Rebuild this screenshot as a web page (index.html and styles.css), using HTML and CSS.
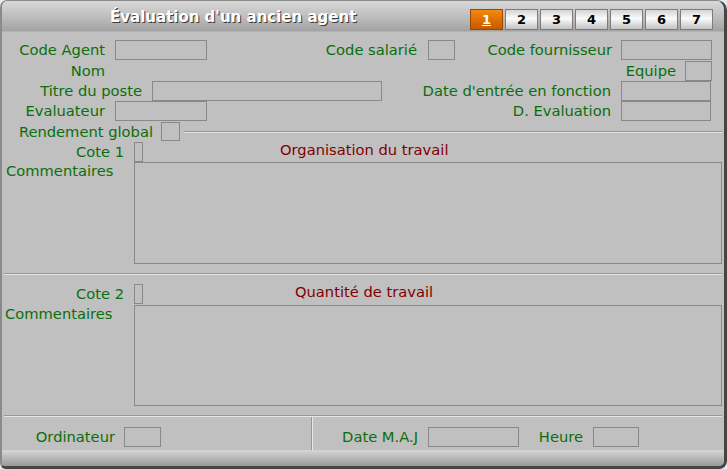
FILE: index.html
```html
<!DOCTYPE html>
<html lang="fr">
<head>
<meta charset="utf-8">
<title>Évaluation d'un ancien agent</title>
<link rel="stylesheet" href="styles.css">
</head>
<body>
<div class="win">
  <div class="titlebar">
    <span class="title">Évaluation d'un ancien agent</span>
    <div class="tabs">
      <span class="tab on"><u>1</u></span>
      <span class="tab">2</span>
      <span class="tab">3</span>
      <span class="tab">4</span>
      <span class="tab">5</span>
      <span class="tab">6</span>
      <span class="tab">7</span>
    </div>
  </div>
  <div class="main">
    <div class="row">
      <span class="lab w103">Code Agent</span><span class="box ml10 w92"></span>
      <span class="lab w210">Code salarié</span><span class="box ml11 w27"></span>
      <span class="lab w157">Code fournisseur</span><span class="box ml9 w91"></span>
    </div>
    <div class="row mt1 pr12">
      <span class="lab w103">Nom</span><span class="fill"></span>
      <span class="lab">Equipe</span><span class="box ml9 w27"></span>
    </div>
    <div class="row pr13">
      <span class="lab w140">Titre du poste</span><span class="box ml10 w230"></span>
      <span class="lab fill">Date d'entrée en fonction</span><span class="box ml10 w90"></span>
    </div>
    <div class="row pr13">
      <span class="lab w103">Evaluateur</span><span class="box ml10 w92"></span>
      <span class="lab fill">D. Evaluation</span><span class="box ml10 w90"></span>
    </div>
    <div class="row mt1 h19">
      <span class="lab w151">Rendement global</span><span class="box ml8 w19 h19"></span>
      <span class="groove"></span>
    </div>

    <div class="row mt1">
      <span class="lab w122">Cote 1</span><span class="box ml10 w9"></span>
      <span class="red ml137">Organisation du travail</span>
    </div>
    <div class="trow">
      <span class="lab com">Commentaires</span><span class="box ta"></span>
    </div>
    <div class="hsep"></div>

    <div class="row mt9">
      <span class="lab w122">Cote 2</span><span class="box ml10 w9"></span>
      <span class="red ml152">Quantité de travail</span>
    </div>
    <div class="trow mt1">
      <span class="lab com com2">Commentaires</span><span class="box ta ta2"></span>
    </div>
    <div class="hsep"></div>

    <div class="bottom">
      <div class="bleft">
        <span class="lab w113">Ordinateur</span><span class="box ml9 w37"></span>
      </div>
      <div class="vsep"></div>
      <div class="bright">
        <span class="lab w105">Date M.A.J</span><span class="box ml10 w91"></span>
        <span class="lab w64">Heure</span><span class="box ml10 w46"></span>
      </div>
    </div>
  </div>
  <div class="statusbar"></div>
</div>
</body>
</html>
```
FILE: styles.css
```css
body {
  margin: 0;
  background: #dff0ef;
  font-family: "DejaVu Sans", "Liberation Sans", sans-serif;
}

.win {
  width: 727px;
  height: 469px;
  box-sizing: border-box;
  border-left: 2px solid #8a8a8a;
  border-top: 1px solid #8a8a8a;
  border-right: 3px solid #454545;
  border-bottom: 3px solid #454545;
  border-radius: 7px 10px 8px 6px;
  background: #c0c0c0;
  display: flex;
  flex-direction: column;
  overflow: hidden;
}

.titlebar {
  height: 30px;
  border-bottom: 1px solid #b2b2b2;
  background: linear-gradient(#d8d8d8, #bcbcbc 55%, #a2a2a2);
  display: flex;
  flex: none;
}

.title {
  margin-left: 108px;
  padding-top: 2px;
  align-self: center;
  font-weight: bold;
  font-size: 15px;
  color: #ffffff;
  text-shadow: 1px 1px 0 #3a3a3a;
  white-space: nowrap;
}

.tabs {
  display: flex;
  gap: 2px;
  margin: 8px 11px 0 auto;
  align-self: flex-start;
}

.tab {
  width: 33px;
  height: 21px;
  box-sizing: border-box;
  border: 1px solid #7c7c7c;
  background: linear-gradient(#d4d4d4, #fbfbfb 45%, #c2c2c2);
  font-weight: bold;
  font-size: 13px;
  color: #000;
  display: flex;
  align-items: center;
  justify-content: center;
}

.tab.on {
  background: linear-gradient(#f28a14, #e07000 50%, #c65a00);
  border-color: #9a4800;
  color: #fff;
}

.main {
  flex: 1;
  padding-top: 8px;
  display: flex;
  flex-direction: column;
}

.row {
  display: flex;
  align-items: center;
  height: 20px;
  flex: none;
}

.trow {
  display: flex;
  align-items: flex-start;
  flex: none;
}

.lab {
  color: #0b6e0b;
  font-size: 14.7px;
  line-height: 18px;
  white-space: nowrap;
  text-align: right;
  flex: none;
}

.red {
  color: #820000;
  font-size: 14.7px;
  line-height: 18px;
  white-space: nowrap;
  flex: none;
  margin-top: -4px;
}

.box {
  border: 1px solid #888888;
  box-sizing: border-box;
  height: 20px;
  flex: none;
}

.fill { flex: 1; }

.groove {
  flex: 1;
  margin: 0 2px 0 4px;
  border-top: 1px solid #969696;
  border-bottom: 1px solid #e6e6e6;
}

.hsep {
  flex: none;
  margin: 9px 2px 0 2px;
  border-top: 1px solid #969696;
  border-bottom: 1px solid #e6e6e6;
}

.com {
  width: 132px;
  box-sizing: border-box;
  padding-left: 4px;
  text-align: left;
}

.com2 { padding-left: 3px; }

.ta {
  width: 588px;
  height: 102px;
}

.ta2 { height: 101px; }

.bottom {
  display: flex;
  height: 33px;
  flex: none;
}

.bleft {
  width: 309px;
  display: flex;
  align-items: center;
  padding-top: 10px;
  align-self: flex-start;
}

.bright {
  display: flex;
  align-items: center;
  padding-top: 10px;
  align-self: flex-start;
}

.vsep {
  border-left: 1px solid #969696;
  border-right: 1px solid #e6e6e6;
}

.statusbar {
  height: 16px;
  flex: none;
  background: linear-gradient(#d6d6d6, #b8b8b8 50%, #9a9a9a);
}

.mt1 { margin-top: 1px; }
.mt9 { margin-top: 9px; }
.pr12 { padding-right: 12px; }
.pr13 { padding-right: 13px; }
.h19 { height: 19px; }

.ml8 { margin-left: 8px; }
.ml9 { margin-left: 9px; }
.ml10 { margin-left: 10px; }
.ml11 { margin-left: 11px; }
.ml137 { margin-left: 137px; }
.ml152 { margin-left: 152px; }

.w9 { width: 9px; }
.w19 { width: 19px; }
.w27 { width: 27px; }
.w37 { width: 37px; }
.w46 { width: 46px; }
.w64 { width: 64px; }
.w90 { width: 90px; }
.w91 { width: 91px; }
.w92 { width: 92px; }
.w103 { width: 103px; }
.w105 { width: 105px; }
.w113 { width: 113px; }
.w122 { width: 122px; }
.w140 { width: 140px; }
.w151 { width: 151px; }
.w157 { width: 157px; }
.w210 { width: 210px; }
.w230 { width: 230px; }
```
